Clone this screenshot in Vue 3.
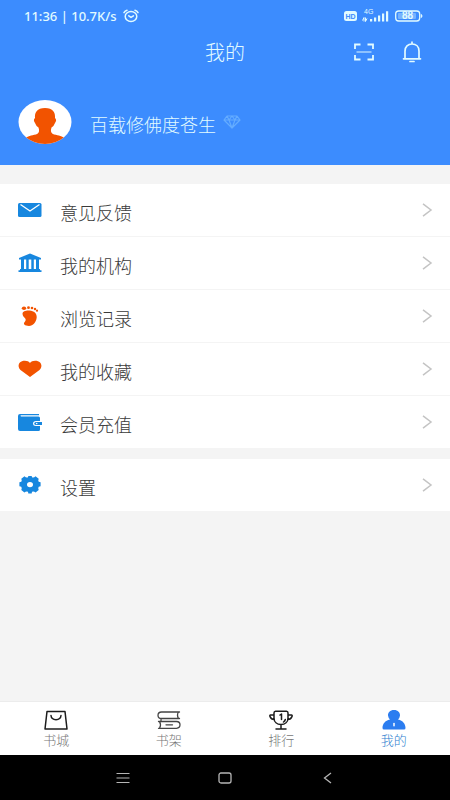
<script setup>
const groups = [
  [
    { icon: 'mail', label: '意见反馈' },
    { icon: 'bank', label: '我的机构' },
    { icon: 'foot', label: '浏览记录' },
    { icon: 'heart', label: '我的收藏' },
    { icon: 'wallet', label: '会员充值' },
  ],
  [{ icon: 'gear', label: '设置' }],
]
const tabs = [
  { icon: 'bag', label: '书城' },
  { icon: 'books', label: '书架' },
  { icon: 'cup', label: '排行' },
  { icon: 'user', label: '我的', active: true },
]
</script>

<template>
  <div class="page">
    <header class="header">
      <div class="status">
        <span class="clock">11:36 | 10.7K/s</span>
        <svg class="alarm" width="16" height="14" viewBox="0 0 16 14" fill="none" stroke="currentColor" stroke-width="1.5" stroke-linecap="round">
          <ellipse cx="8" cy="7.5" rx="5.8" ry="5" />
          <path d="M1 3.6Q2 1.6 4 1.2M15 3.6Q14 1.6 12 1.2M5.8 6.8L8 8.4L10.4 6.8" />
        </svg>
        <span class="spacer"></span>
        <svg width="82" height="16" viewBox="0 0 82 16" fill="currentColor">
          <rect x="1" y="3" width="13" height="10" rx="2.5" />
          <text x="2.5" y="10.6" class="hd">HD</text>
          <text x="21" y="6.4" class="net">4G</text>
          <path d="M19.500 12.500l1.500-3v4M22.500 9.500v4l1.500-3" fill="none" stroke="currentColor" stroke-width="1" />
          <path d="M27 11h2.200v2.500H27zM31 9.500h2.200v4H31zM35 7.500h2.200v6H35zM39 5.500h2.200v8H39zM43 3.200h2.200v10.300H43z" />
          <rect x="52.700" y="3" width="24" height="10" rx="3" fill="none" stroke="currentColor" stroke-width="1.300" />
          <rect x="55" y="5" width="18" height="6" rx="1" opacity=".35" />
          <path d="M78.300 6.500q1.500 1.500 0 3z" stroke="currentColor" />
          <text x="59" y="11.200" class="level">88</text>
        </svg>
      </div>
      <div class="title-bar">
        <h1>我的</h1>
        <div class="actions">
          <button type="button" aria-label="扫一扫">
            <svg width="20" height="18" viewBox="0 0 20 18" fill="none" stroke="currentColor" stroke-width="1.800">
              <path d="M1 6V1.500H6.500M13.500 1.500H19V6M19 12V16.500H13.500M6.500 16.500H1V12" />
              <path d="M2.500 9H17.500" stroke-width="1.400" opacity=".7" />
            </svg>
          </button>
          <button type="button" aria-label="通知">
            <svg width="20" height="22" viewBox="0 0 20 22" fill="none" stroke="currentColor" stroke-width="1.700" stroke-linecap="round" stroke-linejoin="round">
              <path d="M10 1.200V3M1.500 17.800H18.500M3 17.500V10C3 5.500 6 3 10 3S17 5.500 17 10V17.500M8 20.500H12" />
            </svg>
          </button>
        </div>
      </div>
      <div class="profile">
        <svg class="avatar" width="54" height="44" viewBox="0 0 54 44">
          <defs><clipPath id="face"><ellipse cx="27" cy="22" rx="26.500" ry="22" /></clipPath></defs>
          <ellipse cx="27" cy="22" rx="26.500" ry="22" fill="#fff" />
          <path clip-path="url(#face)" fill="#f25300" d="M27 8C19 8 16.500 12.500 17 18Q14.800 20 17 23Q18 26 20.500 27.500Q22.500 33 18 34.500C13 35.500 10 36 6 39V44H48V39C44 36 41 35.500 36 34.500Q31.500 33 33.500 27.500Q36 26 37 23Q39.200 20 37 18C37.500 12.500 35 8 27 8Z" />
        </svg>
        <span class="name">百载修佛度苍生</span>
        <svg class="gem" width="18" height="14" viewBox="0 0 18 14" fill="none" stroke="currentColor" stroke-width="1.200" stroke-linejoin="round">
          <path d="M4 1H14L17 5L9 13L1 5ZM1 5H17M4 1L6 5L9 13L12 5L14 1M6 5L9 1L12 5" />
        </svg>
      </div>
    </header>

    <main class="content">
      <nav v-for="(group, i) in groups" :key="i" class="group">
        <a v-for="item in group" :key="item.label" href="#" class="row">
          <svg class="icon" width="24" height="22" viewBox="0 0 24 22" fill="currentColor" :class="item.icon">
            <template v-if="item.icon === 'mail'">
              <rect y="4" width="23.500" height="14" rx="1.500" />
              <path d="M2.500 5.500L12 12L21.500 5.500" fill="none" stroke="#fff" stroke-width="1.300" />
            </template>
            <template v-else-if="item.icon === 'bank'">
              <path d="M12 1.500L23 6V7.500H1V6ZM3 7.500H6V17H3ZM8.200 7.500H10.700V17H8.200ZM13.300 7.500H15.800V17H13.300ZM18 7.500H21V17H18ZM2 17H22V18.200H23.500V20H.5V18.200H2Z" />
            </template>
            <template v-else-if="item.icon === 'foot'">
              <ellipse cx="6" cy="3.300" rx="2.200" ry="1.800" />
              <circle cx="10.500" cy="2.700" r="1.400" /><circle cx="14" cy="3" r="1.300" />
              <circle cx="17" cy="4" r="1.200" /><circle cx="19" cy="5.700" r="1.100" />
              <path d="M4.500 9C4.500 6 8.500 5.300 11.500 5.600C16 6 19 8.500 18.700 12.500C18.200 17 15 20.900 11 20.900C6.500 20.900 5 18.700 6.500 17.200C8 15.500 8 14.300 7 13.200Q4.500 11.500 4.500 9Z" />
            </template>
            <template v-else-if="item.icon === 'heart'">
              <path d="M12 19L2.500 12C-.5 9.200 0 4.500 4 3.200C7.500 2.200 10.500 3 12 5C13.500 3 16.500 2.200 20 3.200C24 4.500 24.500 9.200 21.500 12Z" />
            </template>
            <template v-else-if="item.icon === 'wallet'">
              <path d="M2 3H21V4.300H3Q1.800 4.800 3 5.500H20.500Q22 5.500 22 7V10H18Q15 10 15 12.500T18 15H22V18.500Q22 20 20.500 20H2Q0 20 0 18V5Q0 3 2 3Z" />
              <path d="M18 11H24V14H18Q16.300 14 16.300 12.500T18 11Z" />
              <circle cx="18.700" cy="12.500" r=".8" fill="#fff" />
            </template>
            <template v-else>
              <path fill-rule="evenodd" d="M6.500 2.200Q8.200 4 10 3.200L10.300 2H13.700L14 3.200Q15.800 4 17.500 2.200L20.700 4.800Q19.800 6.800 20.700 7.800L22.600 8.300V12.200L20.700 12.800Q19.800 14 20.700 16L17.600 18.500Q15.800 17 14 17.800L13.700 19.500H10.300L10 17.800Q8.200 17 6.400 18.500L3.300 16Q4.200 14 3.300 12.800L1.400 12.200V8.300L3.300 7.800Q4.200 6.800 3.300 4.800ZM12 8A3 2.600 0 1 0 12 13.200A3 2.600 0 1 0 12 8Z" />
            </template>
          </svg>
          <span class="label">{{ item.label }}</span>
          <svg width="12" height="16" viewBox="0 0 12 16" fill="none" stroke="#c4c4c4" stroke-width="1.500">
            <path d="M2 1.800L10 8L2 14.200" />
          </svg>
        </a>
      </nav>
    </main>

    <nav class="tabs">
      <a v-for="tab in tabs" :key="tab.label" href="#" class="tab" :class="{ active: tab.active }">
        <svg width="24" height="20" viewBox="0 0 24 20" fill="none" stroke="#1c1c1c" stroke-width="1.500" stroke-linejoin="round" stroke-linecap="round">
          <template v-if="tab.icon === 'bag'">
            <path d="M3 1.500H21L23 19H1Z" />
            <path d="M7 5.500C7.500 11 16.500 11 17 5.500" />
          </template>
          <g v-else-if="tab.icon === 'books'" stroke="#444" stroke-width="1.300">
            <path d="M22.500 2H4.500Q1 2 1 5.300T4.500 8.500H22.500M21.500 2Q19.500 5 21.500 8.500M4 8.500V10.800" />
            <path d="M1.500 11.500H19.500Q23 11.500 23 14.800T19.500 18.300H1.500M2.500 11.500Q4.500 14.800 2.500 18.300M9 14.800H15.500" />
          </g>
          <template v-else-if="tab.icon === 'cup'">
            <path d="M6.500 1.200H17.500Q19 1.200 19 3V8C19 12 16 14.500 12 14.500S5 12 5 8V3Q5 1.200 6.500 1.200ZM5 5H1.500Q.5 5 1 6.500Q2 9.500 5.300 9.500M19 5H22.500Q23.500 5 23 6.500Q22 9.500 18.700 9.500M12 14.500V19M7 19H17M11 5L12.500 4V9.500M14.500 12Q16 11 16.300 9.500" />
          </template>
          <template v-else>
            <path fill="#2c7df0" stroke="none" d="M12 0C8 0 5.800 2.500 6 5.500Q6.300 8 8 9.500C3 10.500 .5 14 .5 18Q.5 19.500 2 19.500H22Q23.500 19.500 23.500 18C23.500 14 21 10.500 16 9.500Q17.700 8 18 5.500C18.200 2.500 16 0 12 0Z" />
            <path stroke="#fff" d="M12 13.500V15.800" />
          </template>
        </svg>
        <span>{{ tab.label }}</span>
      </a>
    </nav>

    <footer class="system">
      <button type="button" aria-label="菜单">
        <svg width="14" height="14" viewBox="0 0 14 14" stroke="currentColor" stroke-width="1.200"><path d="M.5 2.500H13.500M.5 7H13.500M.5 11.500H13.500" /></svg>
      </button>
      <button type="button" aria-label="主屏幕">
        <svg width="14" height="14" viewBox="0 0 14 14" fill="none" stroke="currentColor" stroke-width="1.300"><rect x="1" y="2" width="12" height="10" rx="2" /></svg>
      </button>
      <button type="button" aria-label="返回">
        <svg width="14" height="14" viewBox="0 0 14 14" fill="none" stroke="currentColor" stroke-width="1.300"><path d="M11 2L4.500 7L11 12" /></svg>
      </button>
    </footer>
  </div>
</template>

<style>
body {
  margin: 0;
}
</style>

<style scoped>
.page {
  display: flex;
  flex-direction: column;
  min-height: 100vh;
  background: #f4f4f4;
  color: #3a3a3a;
  font-family: "Noto Sans CJK SC", sans-serif;
  font-weight: 300;
}
button {
  display: flex;
  padding: 0;
  border: 0;
  background: none;
  color: inherit;
}
a {
  color: inherit;
  text-decoration: none;
}
svg {
  display: block;
  flex: none;
}
.header {
  background: #3c8cfe;
  color: #e2fbff;
}
.status {
  display: flex;
  align-items: center;
  height: 32px;
  padding: 0 25px 0 24px;
}
.clock {
  font: 500 13px/32px "Noto Sans", sans-serif;
}
.alarm {
  margin-left: 6px;
}
.spacer {
  flex: 1;
}
.hd {
  font: 700 7px "Liberation Sans", sans-serif;
  fill: #3c8cfe;
}
.net {
  font: 400 7px "Liberation Sans", sans-serif;
}
.level {
  font: 700 10px "Liberation Sans", sans-serif;
}
.title-bar {
  display: grid;
  grid-template-columns: 1fr auto 1fr;
  align-items: center;
  height: 40px;
  padding: 0 28px;
}
h1 {
  grid-column: 2;
  margin: 0;
  font-size: 20px;
  line-height: 40px;
  font-weight: 300;
}
.actions {
  display: flex;
  align-items: center;
  justify-content: flex-end;
  gap: 28px;
}
.profile {
  display: flex;
  align-items: center;
  height: 44px;
  padding: 28px 18px 21px;
}
.name {
  margin-left: 18px;
  padding-top: 4px;
  font-size: 18px;
  line-height: 40px;
}
.gem {
  margin-left: 7px;
  color: #64acff;
}
.content {
  flex: 1;
  padding-top: 19px;
}
.group {
  margin-bottom: 10px;
  background: #fff;
}
.row {
  display: flex;
  align-items: center;
  height: 52px;
  padding: 0 17px 0 18px;
  border-bottom: 1px solid #f4f4f4;
}
.label {
  flex: 1;
  padding: 4px 0 0 18px;
  font-size: 18px;
  line-height: 28px;
}
.icon {
  color: #1787df;
}
.foot,
.heart {
  color: #f25300;
}
.tabs {
  display: flex;
  border-top: 1px solid #ececec;
  background: #fff;
}
.tab {
  display: flex;
  flex: 1;
  flex-direction: column;
  align-items: center;
  padding: 8px 0 5px;
  color: #777;
  font-size: 13px;
  line-height: 20px;
}
.active {
  color: #2f7fd0;
}
.system {
  display: flex;
  justify-content: center;
  align-items: center;
  gap: 88px;
  height: 45px;
  background: #000;
  color: #b5b5b5;
}
</style>
